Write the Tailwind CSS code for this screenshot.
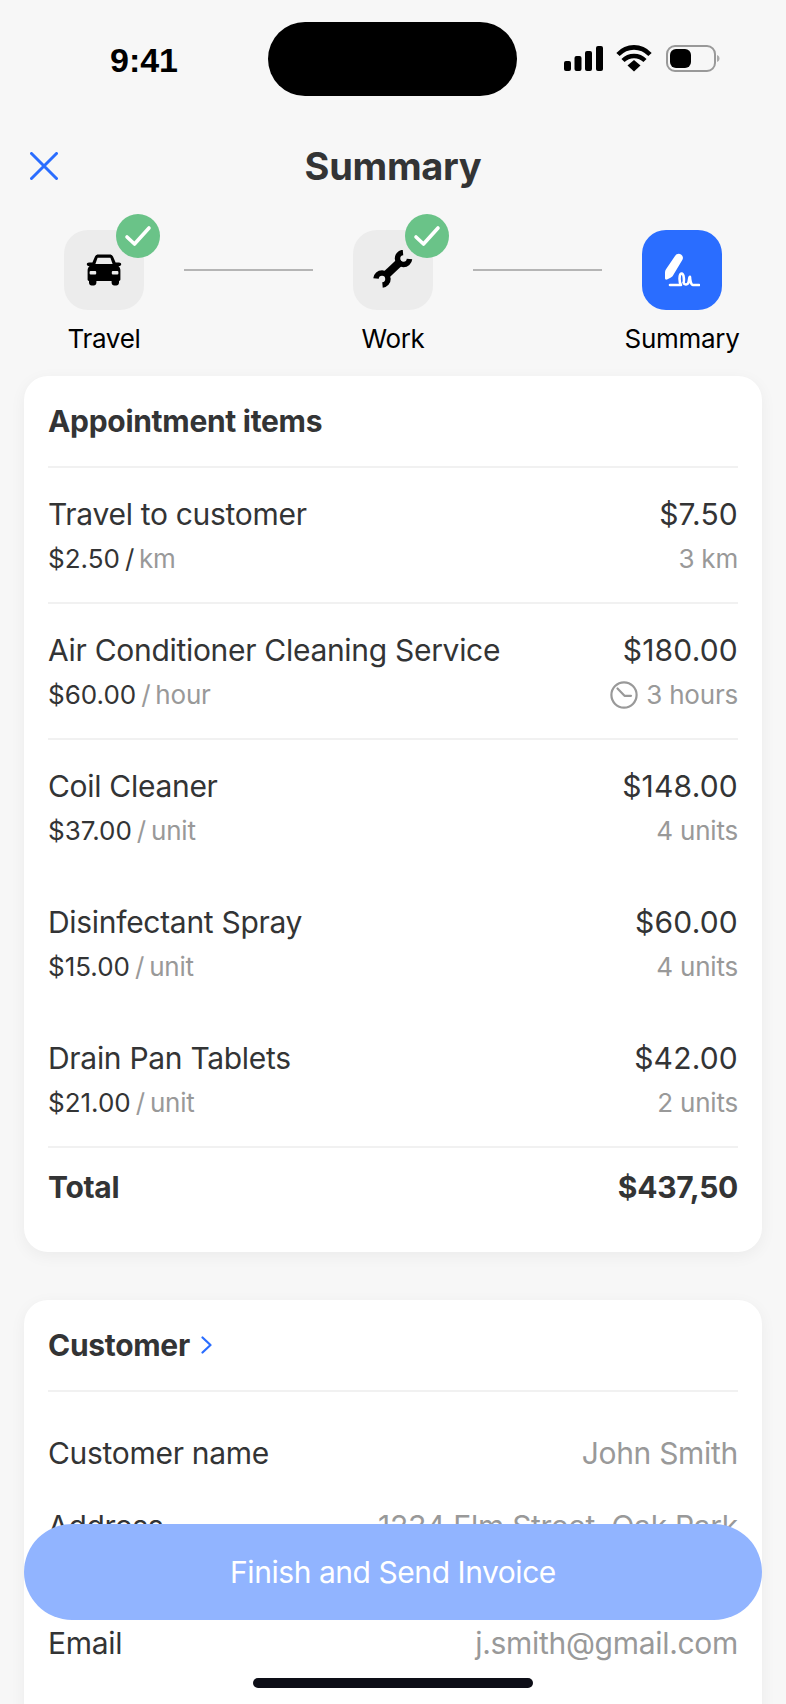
<!DOCTYPE html>
<html lang="en">
<head>
    <meta charset="UTF-8">
    <meta name="viewport" content="width=device-width, initial-scale=1.0">
    <title>Summary</title>
    <script src="https://cdn.jsdelivr.net/npm/@tailwindcss/browser@4"></script>
</head>
<body class="bg-[#f7f7f7] font-['Inter',sans-serif] text-[#333435]">
<div class="relative w-[786px] h-[1704px] overflow-hidden">

    <!-- Status bar -->
    <div class="h-[118px] flex pt-[22px]">
        <div class="w-[268px] h-[74px] flex items-center justify-center pl-[20px] pt-[3px]">
            <span class="font-['Liberation_Sans',sans-serif] text-[34px] font-bold text-black">9:41</span>
        </div>
        <div class="w-[249px] h-[74px] rounded-[37px] bg-black"></div>
        <div class="flex-1 h-[74px] flex items-center pl-[47px]">
            <svg class="block" width="156" height="28" viewBox="0 0 156 28">
                <rect x="0" y="16" width="7" height="10" rx="2" fill="#000"/>
                <rect x="10.5" y="11" width="7" height="15" rx="2" fill="#000"/>
                <rect x="21" y="6" width="7" height="20" rx="2" fill="#000"/>
                <rect x="32" y="1" width="7" height="25" rx="2" fill="#000"/>
                <path d="M54 9.5C63 0 77 0 86 9.5" fill="none" stroke="#000" stroke-width="4.6"/>
                <path d="M59 15.5C65 9.5 75 9.5 81 15.5" fill="none" stroke="#000" stroke-width="4.4"/>
                <path d="M63.5 20.5L70 15L76.5 20.5L70 26.5Z" fill="#000"/>
                <rect x="103" y="1" width="48" height="25" rx="8" fill="none" stroke="#999" stroke-width="2"/>
                <rect x="106" y="4" width="21" height="19" rx="6" fill="#000"/>
                <path d="M153 10C155 11 155.5 12 155.5 13.5C155.5 15 155 16 153 17Z" fill="#aaa"/>
            </svg>
        </div>
    </div>

    <!-- Header -->
    <div class="relative h-[96px] flex items-center justify-center">
        <svg class="absolute left-[30px] top-[34px]" width="28" height="28" viewBox="0 0 28 28" fill="none" stroke="#2a6dff" stroke-width="3" stroke-linecap="round">
            <path d="M1.5 1.5L26.5 26.5M26.5 1.5L1.5 26.5"/>
        </svg>
        <h1 class="text-[38px] font-bold leading-none tracking-[-0.3px]">Summary</h1>
    </div>

    <!-- Steps -->
    <div class="h-[162px] flex pl-[64px]">
        <div class="relative w-[80px] mt-[16px]">
            <div class="w-[80px] h-[80px] rounded-[24px] bg-[#ececec] flex items-center justify-center">
                <svg width="36" height="32" viewBox="0 0 36 32">
                    <path fill="#000" d="M9 2.5C9.6 1.2 10.8.5 12.2.5H23.8C25.2.5 26.4 1.2 27 2.5L29.6 8.4H33C34.3 8.4 35.2 9.2 35.2 10.2 35.2 11.2 34.3 12 33 12H32.4C33.6 13 34.4 14.6 34.4 16.4V25.6C34.4 26.4 33.8 27 33 27V28.8C33 30.4 31.8 31.4 30.4 31.4H28.2C26.8 31.4 25.6 30.4 25.6 28.8V27H10.4V28.8C10.4 30.4 9.2 31.4 7.8 31.4H5.6C4.2 31.4 3 30.4 3 28.8V27C2.2 27 1.6 26.4 1.6 25.6V16.4C1.6 14.6 2.4 13 3.6 12H3C1.7 12 .8 11.2 .8 10.2 .8 9.2 1.7 8.4 3 8.4H6.4ZM11.6 3.8 9.4 10H26.6L24.4 3.8Z"/>
                    <rect x="3.6" y="17" width="6.6" height="3.4" rx="1" fill="#ececec"/>
                    <rect x="25.8" y="17" width="6.6" height="3.4" rx="1" fill="#ececec"/>
                </svg>
            </div>
            <div class="absolute left-[52px] top-[-16px] w-[44px] h-[44px] rounded-full bg-[#6ac388] flex items-center justify-center">
                <svg width="28" height="24" viewBox="0 0 28 24" fill="none" stroke="#fff" stroke-width="3.6" stroke-linecap="round" stroke-linejoin="round"><path d="M3 13L10.5 20L25 4"/></svg>
            </div>
            <div class="absolute left-[-20px] w-[120px] top-[92px] text-center text-[26px] leading-[34px] tracking-[-0.3px] text-black">Travel</div>
        </div>
        <div class="w-[129px] h-[2px] bg-[#b5b5b5] mt-[55px] ml-[40px] mr-[40px]"></div>
        <div class="relative w-[80px] mt-[16px]">
            <div class="w-[80px] h-[80px] rounded-[24px] bg-[#ececec] flex items-center justify-center">
                <svg class="mt-[-2px] ml-[-1px]" width="40" height="38" viewBox="0 0 40 38" fill="none" stroke="#000">
                    <path stroke-width="8" d="M12 26L28 11"/>
                    <path stroke-width="5.5" d="M30 2.5A6 6 0 1 0 36.5 9"/>
                    <path stroke-width="5.5" d="M9.5 35A6 6 0 1 0 3 28.5"/>
                </svg>
            </div>
            <div class="absolute left-[52px] top-[-16px] w-[44px] h-[44px] rounded-full bg-[#6ac388] flex items-center justify-center">
                <svg width="28" height="24" viewBox="0 0 28 24" fill="none" stroke="#fff" stroke-width="3.6" stroke-linecap="round" stroke-linejoin="round"><path d="M3 13L10.5 20L25 4"/></svg>
            </div>
            <div class="absolute left-[-20px] w-[120px] top-[92px] text-center text-[26px] leading-[34px] tracking-[-0.3px] text-black">Work</div>
        </div>
        <div class="w-[129px] h-[2px] bg-[#b5b5b5] mt-[55px] ml-[40px] mr-[40px]"></div>
        <div class="relative w-[80px] mt-[16px]">
            <div class="w-[80px] h-[80px] rounded-[24px] bg-[#2a6dff] flex items-center justify-center">
                <svg class="mt-[2px]" width="36" height="36" viewBox="0 0 36 36">
                    <path fill="#fff" d="M11 3C12.3.8 15 .2 17 1.4 19 2.6 19.5 5 18.3 7L9 22.5C8.5 23.5 7.5 24.2 6.5 24.7L3 26.5C1.8 27 1 26.2 1 25V19.5C1 18.4 1.3 17.4 2 16.3Z"/>
                    <path fill="none" stroke="#fff" stroke-width="2.6" stroke-linecap="round" stroke-linejoin="round" d="M6 32H17C15 29 15 21 17.5 20.5 20.5 20.5 20 29 19.5 29.5 20.5 32.5 23.5 32 24.5 29.5 25 27 25.5 23 26 24 26 27 27 32 29 32H35"/>
                </svg>
            </div>
            <div class="absolute left-[-20px] w-[120px] top-[92px] text-center text-[26px] leading-[34px] tracking-[-0.3px] text-black">Summary</div>
        </div>
    </div>

    <!-- Appointment items -->
    <div class="mx-[24px] h-[876px] rounded-[24px] bg-white px-[24px] shadow-[0_4px_16px_rgba(0,0,0,0.05)]">
        <div class="h-[92px] border-b-2 border-[#f1f1f1] flex items-center">
            <h2 class="text-[30px] font-bold tracking-[-0.3px]">Appointment items</h2>
        </div>

        <div class="h-[136px] border-b-2 border-[#f1f1f1] pt-[28px]">
            <div class="flex justify-between text-[30px] leading-[36px] tracking-[-0.3px]"><span>Travel to customer</span><span class="tracking-[0.2px]">$7.50</span></div>
            <div class="flex justify-between text-[26px] leading-[36px] tracking-[-0.2px] mt-[9px] text-[#999]"><span><span class="text-[#333435] tracking-[0px]">$2.50</span><span class="text-[#333435] ml-[5px]">/</span><span class="ml-[5px]">km</span></span><span>3 km</span></div>
        </div>
        <div class="h-[136px] border-b-2 border-[#f1f1f1] pt-[28px]">
            <div class="flex justify-between text-[30px] leading-[36px] tracking-[-0.3px]"><span>Air Conditioner Cleaning Service</span><span class="tracking-[0.2px]">$180.00</span></div>
            <div class="flex justify-between text-[26px] leading-[36px] tracking-[-0.2px] mt-[9px] text-[#999]"><span><span class="text-[#333435] tracking-[0px]">$60.00</span><span class="ml-[5px]">/</span><span class="ml-[5px]">hour</span></span>
                <span class="flex items-center gap-[8px]">
                    <svg width="28" height="28" viewBox="0 0 28 28" fill="none" stroke="#999" stroke-width="2.2" stroke-linecap="round" stroke-linejoin="round"><circle cx="14" cy="14" r="12.6"/><path d="M7.5 7.5L14.5 14.8H21"/></svg>
                    3 hours
                </span>
            </div>
        </div>
        <div class="h-[136px] pt-[28px]">
            <div class="flex justify-between text-[30px] leading-[36px] tracking-[-0.3px]"><span>Coil Cleaner</span><span class="tracking-[0.2px]">$148.00</span></div>
            <div class="flex justify-between text-[26px] leading-[36px] tracking-[-0.2px] mt-[9px] text-[#999]"><span><span class="text-[#333435] tracking-[0px]">$37.00</span><span class="ml-[5px]">/</span><span class="ml-[5px]">unit</span></span><span>4 units</span></div>
        </div>
        <div class="h-[136px] pt-[28px]">
            <div class="flex justify-between text-[30px] leading-[36px] tracking-[-0.3px]"><span>Disinfectant Spray</span><span class="tracking-[0.2px]">$60.00</span></div>
            <div class="flex justify-between text-[26px] leading-[36px] tracking-[-0.2px] mt-[9px] text-[#999]"><span><span class="text-[#333435] tracking-[0px]">$15.00</span><span class="ml-[5px]">/</span><span class="ml-[5px]">unit</span></span><span>4 units</span></div>
        </div>
        <div class="h-[136px] border-b-2 border-[#f1f1f1] pt-[28px]">
            <div class="flex justify-between text-[30px] leading-[36px] tracking-[-0.3px]"><span>Drain Pan Tablets</span><span class="tracking-[0.2px]">$42.00</span></div>
            <div class="flex justify-between text-[26px] leading-[36px] tracking-[-0.2px] mt-[9px] text-[#999]"><span><span class="text-[#333435] tracking-[0px]">$21.00</span><span class="ml-[5px]">/</span><span class="ml-[5px]">unit</span></span><span>2 units</span></div>
        </div>
        <div class="flex justify-between pt-[21px] text-[30px] leading-[36px] tracking-[-0.3px] font-bold"><span>Total</span><span>$437,50</span></div>
    </div>

    <!-- Customer -->
    <div class="mx-[24px] mt-[48px] h-[500px] rounded-[24px] bg-white px-[24px] shadow-[0_4px_16px_rgba(0,0,0,0.05)]">
        <div class="h-[92px] border-b-2 border-[#f1f1f1] flex items-center gap-[11px]">
            <h2 class="text-[30px] font-bold tracking-[-0.3px]">Customer</h2>
            <svg width="11" height="18" viewBox="0 0 11 18" fill="none" stroke="#2a6dff" stroke-width="2.2" stroke-linecap="round" stroke-linejoin="round"><path d="M1.5 1.5L9.5 9L1.5 16.5"/></svg>
        </div>
        <div class="flex justify-between text-[30px] leading-[36px] tracking-[-0.3px] pt-[43px]"><span>Customer name</span><span class="text-[#999]">John Smith</span></div>
        <div class="flex justify-between text-[30px] leading-[40px] tracking-[-0.3px] mt-[35px]"><span>Address</span><span class="text-right text-[#999]">1234 Elm Street, Oak Park<br>Chicago</span></div>
        <div class="flex justify-between text-[30px] leading-[36px] tracking-[-0.3px] mt-[39px]"><span>Email</span><span class="text-[#999]">j.smith@gmail.com</span></div>
    </div>

    <!-- Floating button -->
    <div class="absolute left-[24px] top-[1524px] w-[738px] h-[96px] rounded-[48px] bg-[#91b4ff] flex items-center justify-center text-[30px] tracking-[-0.45px] text-white">Finish and Send Invoice</div>

    <!-- Home indicator -->
    <div class="absolute left-[253px] top-[1678px] w-[280px] h-[10px] rounded-full bg-[#0d0e17]"></div>
</div>
</body>
</html>
